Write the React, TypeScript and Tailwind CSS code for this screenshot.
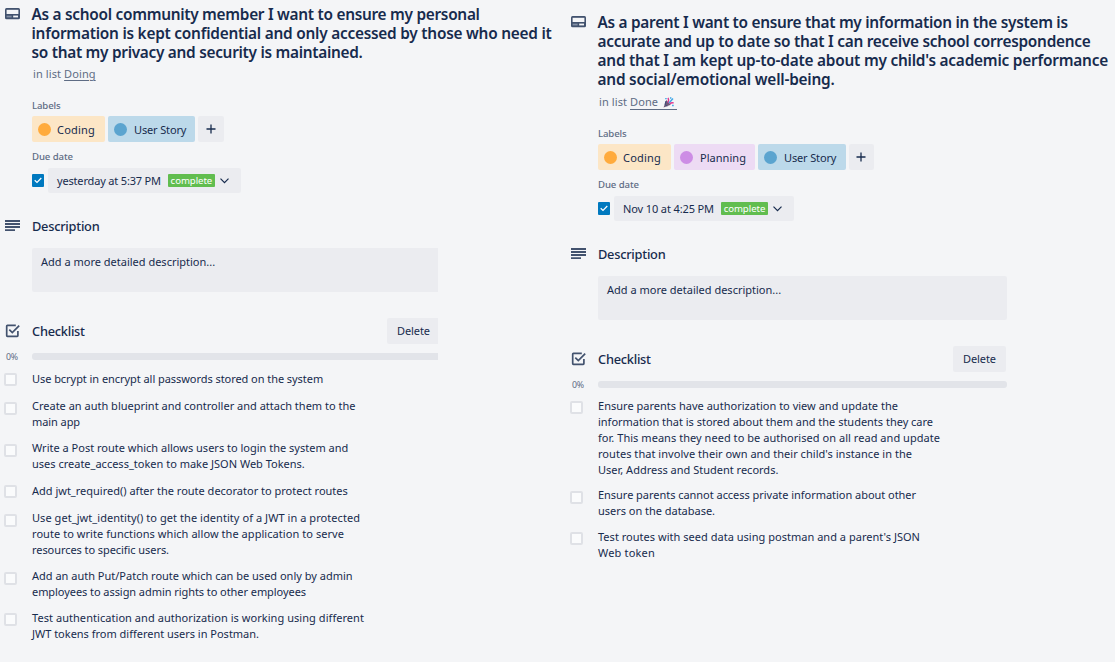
import type { ReactNode } from "react";

type Line = { text: string; track: string };
type Item = { height: string; boxTop: string; lines: Line[] };
type Tag = { text: string; width: string; bg: string; dot: string; track: string; gap: string };

const CODING: Tag = { text: "Coding", width: "w-[73px]", bg: "bg-[#fce6c6]", dot: "bg-[#ffab3d]", track: "tracking-[0.2px]", gap: "gap-1.5" };
const PLANNING: Tag = { text: "Planning", width: "w-[81px]", bg: "bg-[#eddbf4]", dot: "bg-[#cd8de5]", track: "tracking-[0.04px]", gap: "gap-[7px]" };
const STORY: Tag = { text: "User Story", width: "w-[87px]", bg: "bg-[#bcd9ea]", dot: "bg-[#5ba4cf]", track: "tracking-[-0.15px]", gap: "gap-[7px]" };

const t = (text: string, track = "tracking-normal"): Line => ({ text, track });

const leftTitle: Line[] = [
  t("As a school community member I want to ensure my personal", "tracking-[-0.285px]"),
  t("information is kept confidential and only accessed by those who need it", "tracking-[-0.24px]"),
  t("so that my privacy and security is maintained.", "tracking-[-0.29px]"),
];

const rightTitle: Line[] = [
  t("As a parent I want to ensure that my information in the system is", "tracking-[-0.29px]"),
  t("accurate and up to date so that I can receive school correspondence", "tracking-[-0.26px]"),
  t("and that I am kept up-to-date about my child's academic performance", "tracking-[-0.22px]"),
  t("and social/emotional well-being.", "tracking-[-0.21px]"),
];

const leftItems: Item[] = [
  { height: "h-[27px]", boxTop: "mt-0.5", lines: [t("Use bcrypt in encrypt all passwords stored on the system", "tracking-[-0.055px]")] },
  { height: "h-[42px]", boxTop: "mt-1", lines: [t("Create an auth blueprint and controller and attach them to the"), t("main app", "tracking-[-0.08px]")] },
  { height: "h-[43px]", boxTop: "mt-1", lines: [t("Write a Post route which allows users to login the system and"), t("uses create_access_token to make JSON Web Tokens.")] },
  { height: "h-[27px]", boxTop: "mt-0.5", lines: [t("Add jwt_required() after the route decorator to protect routes")] },
  {
    height: "h-[58px]",
    boxTop: "mt-1",
    lines: [
      t("Use get_jwt_identity() to get the identity of a JWT in a protected", "tracking-[0.058px]"),
      t("route to write functions which allow the application to serve", "tracking-[0.057px]"),
      t("resources to specific users.", "tracking-[-0.065px]"),
    ],
  },
  { height: "h-[42px]", boxTop: "mt-1", lines: [t("Add an auth Put/Patch route which can be used only by admin"), t("employees to assign admin rights to other employees", "tracking-[-0.063px]")] },
  { height: "h-[42px]", boxTop: "mt-[3px]", lines: [t("Test authentication and authorization is working using different", "tracking-[0.054px]"), t("JWT tokens from different users in Postman.", "tracking-[-0.011px]")] },
];

const rightItems: Item[] = [
  {
    height: "h-[89px]",
    boxTop: "mt-[3px]",
    lines: [
      t("Ensure parents have authorization to view and update the", "tracking-[0.016px]"),
      t("information that is stored about them and the students they care", "tracking-[-0.013px]"),
      t("for. This means they need to be authorised on all read and update", "tracking-[0.041px]"),
      t("routes that involve their own and their child's instance in the", "tracking-[0.041px]"),
      t("User, Address and Student records."),
    ],
  },
  { height: "h-[42px]", boxTop: "mt-1", lines: [t("Ensure parents cannot access private information about other", "tracking-[-0.035px]"), t("users on the database.", "tracking-[-0.024px]")] },
  { height: "h-[42px]", boxTop: "mt-[3px]", lines: [t("Test routes with seed data using postman and a parent's JSON", "tracking-[0.024px]"), t("Web token", "tracking-[0.18px]")] },
];

function CardIcon() {
  return (
    <svg className="block" width="15" height="12" viewBox="0 0 15 12">
      <path d="M1.500 0H13.500Q15 0 15 1.500V9.700Q15 11.200 13.500 11.200H1.500Q0 11.200 0 9.700V1.500Q0 0 1.500 0Z" fill="#42526e" />
      <rect x="1.600" y="1.800" width="11.800" height="4.200" fill="#f4f5f7" />
      <rect x="1.600" y="7.700" width="5" height="1.700" fill="#8390a5" />
      <rect x="8.200" y="7.600" width="4.800" height="1.800" fill="#f4f5f7" />
    </svg>
  );
}

function LinesIcon() {
  return (
    <svg className="block" width="15" height="12" viewBox="0 0 15 12" fill="#42526e">
      <path d="M0 0h15v2H0zM0 3.100h15v1.800H0zM0 6.100h15v1.900H0zM0 9.200h10v1.800H0z" />
    </svg>
  );
}

function CheckIcon() {
  return (
    <svg className="block" width="15" height="14" viewBox="0 0 15 14" fill="none" stroke="#42526e" strokeWidth="1.700">
      <path d="M10.800 1.300H2.400Q1.700 1.300 1.700 2V11.600Q1.700 12.300 2.400 12.300H12.200Q12.900 12.300 12.900 11.600V7" />
      <path d="M4.300 5.600L7.300 8.600L14.200 1.700" />
    </svg>
  );
}

function Popper() {
  return (
    <svg className="ml-[5px] mr-[3px] inline-block align-[-2px]" width="11" height="11" viewBox="0 0 11 11">
      <path d="M3.200 3L7.800 7.800L0.600 10.600Z" fill="#6f5a78" />
      <path d="M3 4L2 7.500L4.200 9.200" stroke="#3c4b78" strokeWidth="1" fill="none" />
      <path d="M5 5.800Q6.500 3.500 5 0.800" stroke="#e0368c" strokeWidth="1.400" fill="none" />
      <path d="M6 6L10 1.500" stroke="#3ba5e8" strokeWidth="1.400" />
      <path d="M6.800 6.800Q8.500 5.200 10.800 6" stroke="#e0368c" strokeWidth="1.300" fill="none" />
      <path d="M2.200 1.600h1.500M7 1h1.400M9.100 8.500h1.600" stroke="#3ba5e8" strokeWidth="1.400" />
    </svg>
  );
}

function Gutter({ children, className = "" }: { children?: ReactNode; className?: string }) {
  return <div className={`w-[27px] shrink-0 ${className}`}>{children}</div>;
}

type CardProps = {
  pad: string;
  title: Line[];
  titleHeight: string;
  list: ReactNode;
  tags: Tag[];
  plusWidth: string;
  date: string;
  dateTrack: string;
  dateWidth: string;
  boxWidth: string;
  boxRound: string;
  barRound: string;
  actions: string;
  itemsTop: string;
  items: Item[];
};

function Card(p: CardProps) {
  return (
    <section className={`pl-[5px] ${p.pad}`}>
      <header className={`flex ${p.titleHeight}`}>
        <Gutter className="pt-[3px]">
          <CardIcon />
        </Gutter>
        <h2 className="-ml-[0.5px] text-[15.4px] font-semibold leading-[19px]">
          {p.title.map((l) => (
            <span key={l.text} className={`block ${l.track}`}>{l.text}</span>
          ))}
        </h2>
      </header>

      <div className="pl-[27px]">
        <p className="mt-1 h-4 pl-px text-[11px] leading-4 tracking-[0.1px] text-[#5e6c84]">in list {p.list}</p>

        <h3 className="mt-[15px] h-4 pt-px text-[9.6px] font-medium leading-4 tracking-[-0.12px] text-[#5e6c84]">Labels</h3>
        <div className="mt-[3px] flex h-[26px] gap-[3px]">
          {p.tags.map((tag) => (
            <span key={tag.text} className={`flex items-center rounded-[2px] pl-1.5 ${tag.width} ${tag.bg} ${tag.gap}`}>
              <i className={`size-[13px] shrink-0 rounded-full ${tag.dot}`} />
              <span className={`pt-[3px] ${tag.track}`}>{tag.text}</span>
            </span>
          ))}
          <button className={`flex items-center justify-center rounded-[2px] bg-[#ebecf0] ${p.plusWidth}`}>
            <svg width="10" height="10" viewBox="0 0 10 10">
              <path d="M5 0.500V9.500M0.500 5H9.500" stroke="#172b4d" strokeWidth="1.300" />
            </svg>
          </button>
        </div>

        <h3 className="mt-1.5 h-4 pt-px text-[9.6px] font-medium leading-4 tracking-[-0.08px] text-[#5e6c84]">Due date</h3>
        <div className="mt-1 flex h-[25px] items-center gap-1">
          <span className="flex h-[13px] w-3 items-center justify-center rounded-[1px] bg-[#0079bf]">
            <svg width="8" height="7" viewBox="0 0 8 7">
              <path d="M0.700 3.300L3 5.500L7.300 1" fill="none" stroke="#fff" strokeWidth="1.200" />
            </svg>
          </span>
          <button className={`flex h-full items-center rounded-[2px] bg-[#ebecf0] pl-[9px] ${p.dateWidth}`}>
            <span className={`whitespace-nowrap pt-px ${p.dateTrack}`}>{p.date}</span>
            <span className="ml-[7px] flex h-[13px] w-[47px] items-center justify-center rounded-[1px] bg-[#61bd4f] text-[9.6px] leading-none tracking-[-0.05px] text-white">complete</span>
            <svg className="ml-[5px]" width="9" height="6" viewBox="0 0 9 6">
              <path d="M0.500 0.700L4.500 4.700L8.500 0.700" fill="none" stroke="#172b4d" strokeWidth="1.200" />
            </svg>
          </button>
        </div>
      </div>

      <div className="mt-[23px] flex h-5 items-center">
        <Gutter>
          <LinesIcon />
        </Gutter>
        <h3 className="pt-0.5 text-[12.8px] font-medium tracking-[-0.25px]">Description</h3>
      </div>
      <div className={`ml-[27px] mt-3 h-11 bg-[#ebecf0] pl-[9px] pt-1.5 leading-4 ${p.boxWidth} ${p.boxRound}`}>Add a more detailed description...</div>

      <div className="mt-[26px] flex h-[26px] items-center">
        <Gutter>
          <CheckIcon />
        </Gutter>
        <div className={`flex h-full items-center justify-between ${p.boxWidth}`}>
          <h3 className="pt-0.5 text-[12.8px] font-medium tracking-[-0.25px]">Checklist</h3>
          <button className={`h-full bg-[#ebecf0] pl-2.5 text-left tracking-[-0.08px] ${p.actions}`}>Delete</button>
        </div>
      </div>

      <div className="mt-[5px] flex h-[15px] items-center">
        <Gutter className="pl-px pt-0.5 text-[8.8px] leading-[13px] tracking-[-0.2px] text-[#5e6c84]">0%</Gutter>
        <div className={`h-[7px] bg-[#e2e4e9] ${p.boxWidth} ${p.barRound}`} />
      </div>

      <ul className={p.itemsTop}>
        {p.items.map((item) => (
          <li key={item.lines[0].text} className={`flex ${item.height}`}>
            <Gutter>
              <span className={`-ml-px block size-[13px] rounded-[2px] border-2 border-[#dfe1e6] bg-[#fafbfc] ${item.boxTop}`} />
            </Gutter>
            <p className="whitespace-nowrap leading-4">
              {item.lines.map((l) => (
                <span key={l.text} className={`block ${l.track}`}>{l.text}</span>
              ))}
            </p>
          </li>
        ))}
      </ul>
    </section>
  );
}

export default function App() {
  return (
    <main className="flex h-[662px] w-[1115px] overflow-hidden bg-[#f4f5f7] font-['Noto_Sans',sans-serif] text-[11px] text-[#172b4d]">
      <div className="w-[566px] shrink-0">
        <Card
          pad="pt-[5px]"
          title={leftTitle}
          titleHeight="h-[57px]"
          list={<a className="underline underline-offset-2">Doing</a>}
          tags={[CODING, STORY]}
          plusWidth="w-[26px]"
          date="yesterday at 5:37 PM"
          dateTrack="tracking-[-0.17px]"
          dateWidth="w-[193px]"
          boxWidth="w-[406px]"
          boxRound="rounded-l-[2px]"
          barRound="rounded-l-[3px]"
          actions="w-[51px] rounded-l-[2px]"
          itemsTop="mt-[7px]"
          items={leftItems}
        />
      </div>
      <div className="grow">
        <Card
          pad="pt-[13px]"
          title={rightTitle}
          titleHeight="h-[77px]"
          list={<a className="border-b border-[#5e6c84]">Done<Popper /></a>}
          tags={[CODING, PLANNING, { ...STORY, width: "w-[88px]" }]}
          plusWidth="w-[25px] pr-px"
          date="Nov 10 at 4:25 PM"
          dateTrack="tracking-[-0.12px]"
          dateWidth="w-[180px]"
          boxWidth="w-[409px]"
          boxRound="rounded-[2px]"
          barRound="rounded-[3px]"
          actions="mr-px w-[53px] rounded-[2px]"
          itemsTop="mt-1.5"
          items={rightItems}
        />
      </div>
    </main>
  );
}
